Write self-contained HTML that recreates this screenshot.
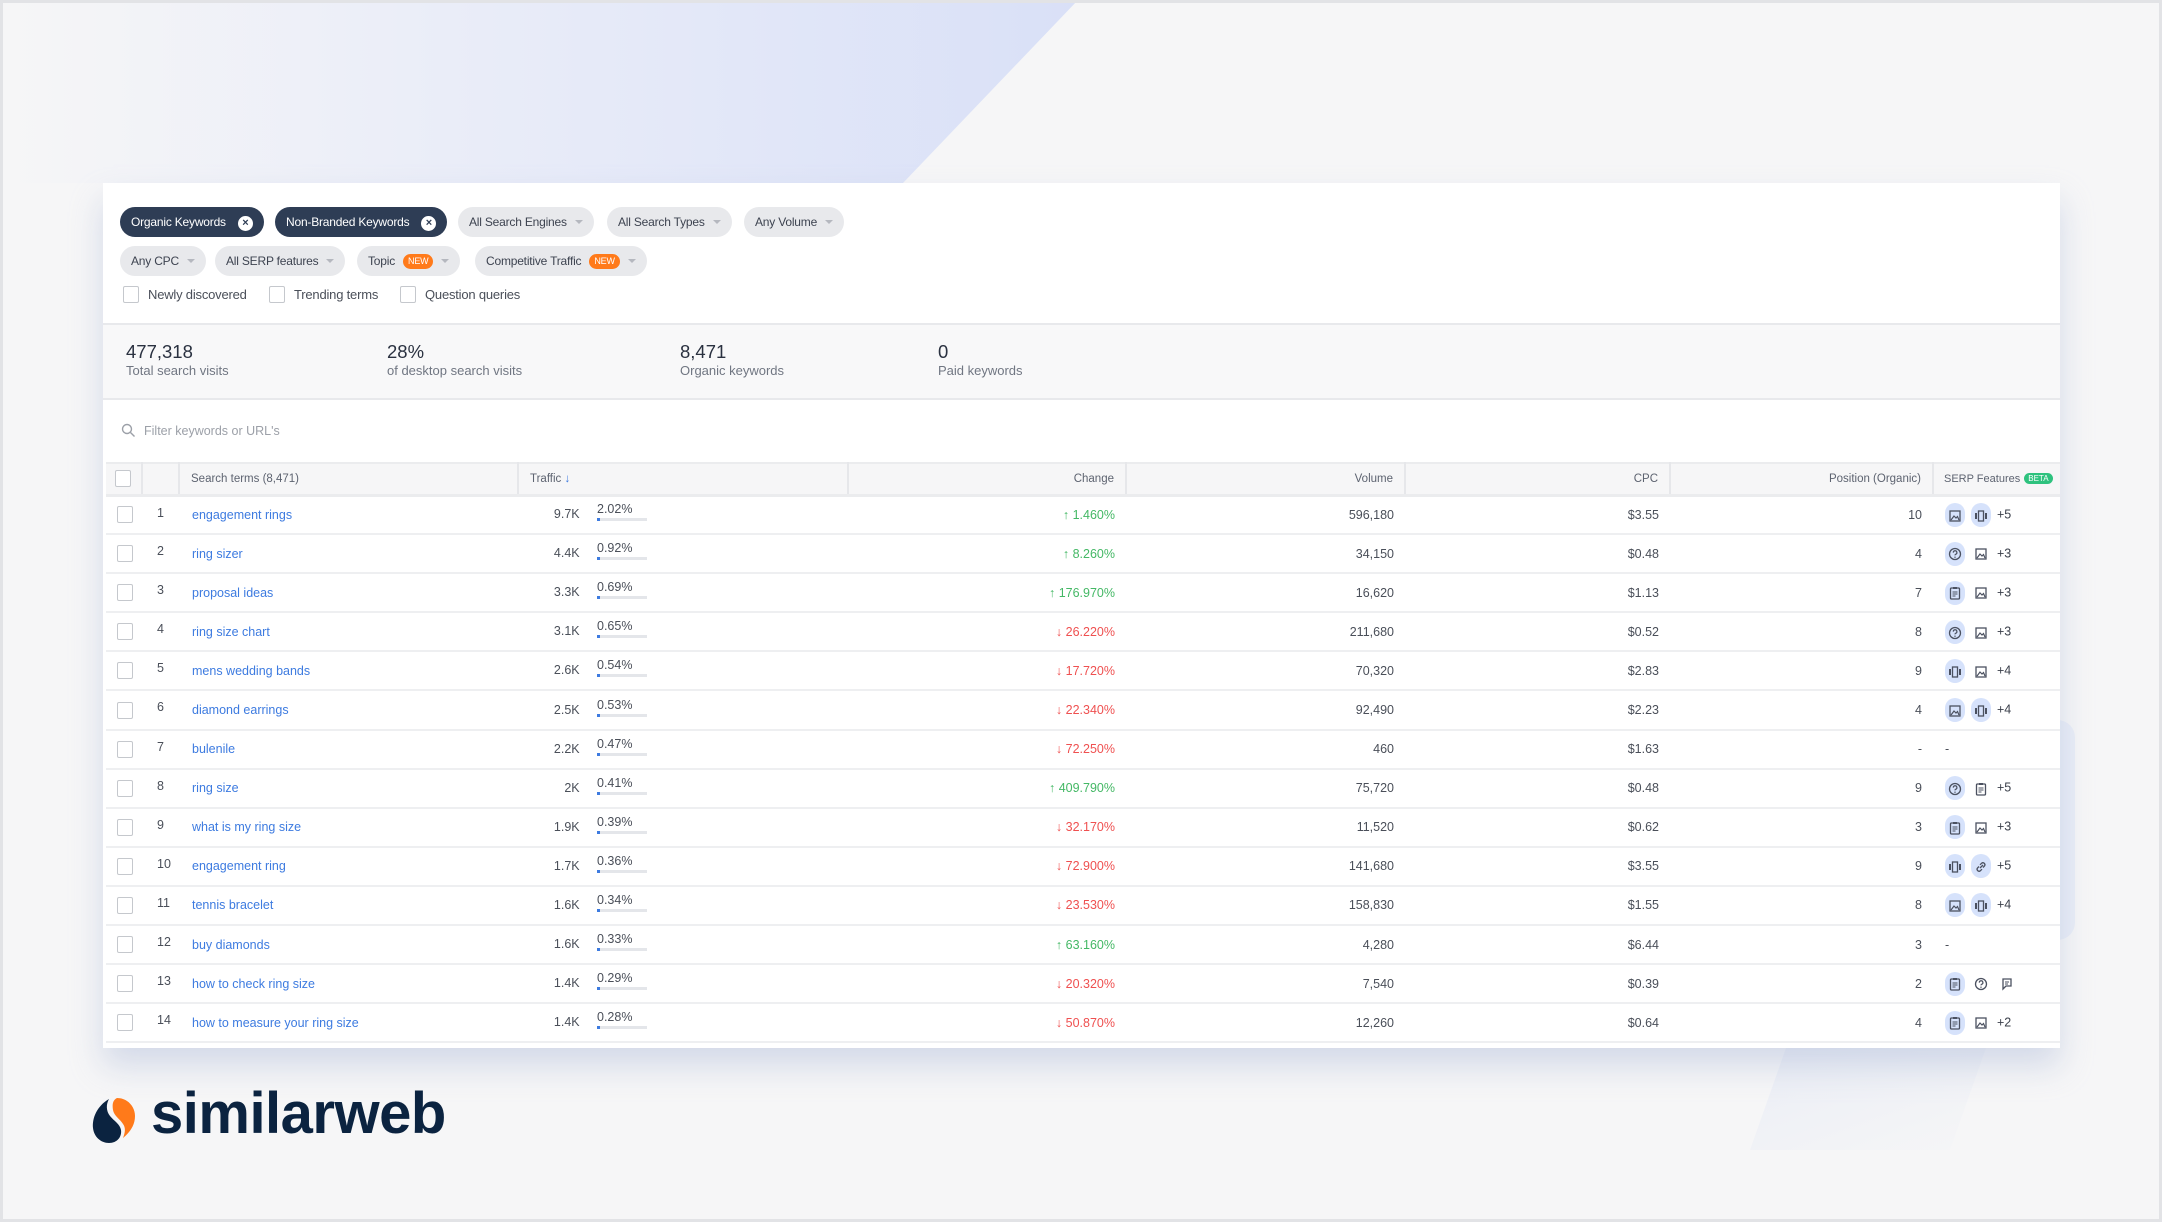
<!DOCTYPE html>
<html><head><meta charset="utf-8"><style>
*{box-sizing:border-box;margin:0;padding:0}
body{width:2162px;height:1222px;overflow:hidden;background:#f6f6f7;font-family:"Liberation Sans",sans-serif;position:relative;color:#3a3f4a}
.frame{position:absolute;inset:0;border:3px solid #e2e3e6;pointer-events:none;z-index:5}
.bg1{position:absolute;left:0;top:0;width:1080px;height:190px;background:linear-gradient(90deg,#f6f6f7 0%,#e6eaf8 55%,#d9e0f7 100%);clip-path:polygon(0 0,1078px 0,903px 183px,0 183px)}
.bg2{position:absolute;left:1750px;top:980px;width:260px;height:170px;background:linear-gradient(160deg,#e3e8f4,#f6f6f7);clip-path:polygon(60px 0,260px 0,200px 170px,0 170px);opacity:.8}
.bg3{position:absolute;left:2040px;top:720px;width:35px;height:220px;border-radius:20px;background:#e9edf7}
.panel{position:absolute;left:103px;top:183px;width:1957px;height:865px;background:#fff;box-shadow:0 18px 30px rgba(170,185,215,.45);overflow:hidden}
.chip{position:absolute;height:30px;border-radius:15px;background:#e8e9ec;color:#3d4350;font-size:12px;line-height:30px;padding:0 11px;white-space:nowrap;letter-spacing:-.2px}
.chip.d{background:#2e3d55;color:#fff}
.chip .x{display:inline-block;width:15px;height:15px;border-radius:50%;background:#fff;color:#2e3d55;font-size:11px;line-height:15px;text-align:center;font-weight:bold;margin-left:12px;vertical-align:0px}
.chip .ar{display:inline-block;margin-left:8px;border-left:4px solid transparent;border-right:4px solid transparent;border-top:4px solid #b5b8bf;vertical-align:2px}
.new{display:inline-block;background:#ff7a1a;color:#fff;font-size:9px;line-height:15px;height:15px;border-radius:8px;padding:0 5px;margin-left:8px;vertical-align:1px}
.cb{position:absolute;width:16px;height:17px;border:1.5px solid #c5c8cd;border-radius:2px;background:#fff}
.cbl{position:absolute;font-size:13px;color:#4a4f59;letter-spacing:-.2px}
.stats{position:absolute;left:0;top:140px;width:100%;height:77px;background:#f8f8f9;border-top:2px solid #e8e9ec;border-bottom:2px solid #e8e9ec}
.st{position:absolute;top:16px}
.st b{display:block;font-weight:normal;font-size:18.5px;color:#2a3140}
.st span{display:block;font-size:13px;color:#707682;margin-top:0px}
.search{position:absolute;left:18px;top:240px;font-size:12.5px;color:#9ca0a8}
table{position:absolute;left:3px;top:279px;border-collapse:collapse;table-layout:fixed;width:1954px}
th{height:32px;background:#f6f6f7;font-weight:normal;font-size:11.5px;color:#5d6370;border-top:2px solid #ebecee;border-bottom:3px solid #ebecee;border-right:2px solid #e6e7ea;text-align:right;padding:0 11px;white-space:nowrap}
td{height:39.1px;border-bottom:2.5px solid #eeeff1;font-size:12.5px;color:#4a4f59;text-align:right;padding:0 11px;white-space:nowrap;vertical-align:middle}
td.kw{text-align:left;color:#3d7be0;padding-left:13px}
td.n{text-align:left;padding-left:15px;vertical-align:top;padding-top:9px}
.up{color:#44b865}.dn{color:#ef5050}
.bar{display:inline-block;width:50px;text-align:left;vertical-align:middle;position:relative;top:-3px}
.bar i{display:block;height:3px;background:#e4e6ea;margin-top:2px;position:relative}
.bar i:before{content:"";position:absolute;left:0;top:0;width:3px;height:3px;background:#3d7be0}
td.sf{text-align:left;padding-left:12px}
.ic{display:inline-block;width:20px;height:24px;vertical-align:middle;margin-right:6px;text-align:center;line-height:24px}
.ic.h{background:#d6e2fb;border-radius:10px}
.ic svg{width:14px;height:14px;vertical-align:middle}
.pl{font-size:12.5px;color:#3a3f4a}
.beta{display:inline-block;background:#2ec27e;color:#fff;font-size:8px;border-radius:8px;padding:1px 4px;margin-left:4px;vertical-align:1px}
.sp{display:inline-block;width:190px}
</style></head><body>
<svg width="0" height="0" style="position:absolute">
<symbol id="img" viewBox="0 0 14 14"><rect x="2" y="2" width="10" height="10" fill="none" stroke="#4b5160" stroke-width="1.3"/><path d="M3 11l3-4 2 2 1.5-1.5L11 11" fill="none" stroke="#4b5160" stroke-width="1.2"/></symbol>
<symbol id="car" viewBox="0 0 14 14"><rect x="4.5" y="2" width="5" height="10" fill="none" stroke="#4b5160" stroke-width="1.3"/><rect x="1" y="4" width="2" height="6" fill="#4b5160"/><rect x="11" y="4" width="2" height="6" fill="#4b5160"/></symbol>
<symbol id="q" viewBox="0 0 14 14"><circle cx="7" cy="7" r="5.5" fill="none" stroke="#4b5160" stroke-width="1.3"/><path d="M5.3 5.6a1.8 1.8 0 1 1 2.3 1.7c-.5.2-.6.5-.6 1.1" fill="none" stroke="#4b5160" stroke-width="1.2"/><circle cx="7" cy="10.2" r=".7" fill="#4b5160"/></symbol>
<symbol id="doc" viewBox="0 0 14 14"><rect x="2.5" y="2" width="9" height="11" rx="1" fill="none" stroke="#4b5160" stroke-width="1.3"/><rect x="5" y="1" width="4" height="2" fill="#4b5160"/><path d="M4.5 6h5M4.5 8h5M4.5 10h3" stroke="#4b5160" stroke-width="1.1"/></symbol>
<symbol id="lnk" viewBox="0 0 14 14"><path d="M6 8l3-3M5 6.5L3.5 8a2 2 0 0 0 2.8 2.8L8 9.2M9 7.5L10.5 6A2 2 0 0 0 7.7 3.2L6 4.8" fill="none" stroke="#4b5160" stroke-width="1.3"/></symbol>
<symbol id="chat" viewBox="0 0 14 14"><path d="M3 2h8v7H6l-3 3z" fill="none" stroke="#4b5160" stroke-width="1.3"/><path d="M5 5h4M5 7h3" stroke="#4b5160" stroke-width="1.1"/></symbol>
</svg>
<div class="bg1"></div><div class="bg3"></div><div class="bg2"></div>
<div class="panel">
 <div class="chip d" style="left:17px;top:24px">Organic Keywords<span class="x">×</span></div>
 <div class="chip d" style="left:172px;top:24px">Non-Branded Keywords<span class="x">×</span></div>
 <div class="chip" style="left:355px;top:24px">All Search Engines<span class="ar"></span></div>
 <div class="chip" style="left:504px;top:24px">All Search Types<span class="ar"></span></div>
 <div class="chip" style="left:641px;top:24px">Any Volume<span class="ar"></span></div>
 <div class="chip" style="left:17px;top:63px">Any CPC<span class="ar"></span></div>
 <div class="chip" style="left:112px;top:63px">All SERP features<span class="ar"></span></div>
 <div class="chip" style="left:254px;top:63px">Topic<span class="new">NEW</span><span class="ar"></span></div>
 <div class="chip" style="left:372px;top:63px">Competitive Traffic<span class="new">NEW</span><span class="ar"></span></div>
 <div class="cb" style="left:20px;top:103px"></div><div class="cbl" style="left:45px;top:104px">Newly discovered</div>
 <div class="cb" style="left:166px;top:103px"></div><div class="cbl" style="left:191px;top:104px">Trending terms</div>
 <div class="cb" style="left:297px;top:103px"></div><div class="cbl" style="left:322px;top:104px">Question queries</div>
 <div class="stats">
  <div class="st" style="left:23px"><b>477,318</b><span>Total search visits</span></div>
  <div class="st" style="left:284px"><b>28%</b><span>of desktop search visits</span></div>
  <div class="st" style="left:577px"><b>8,471</b><span>Organic keywords</span></div>
  <div class="st" style="left:835px"><b>0</b><span>Paid keywords</span></div>
 </div>
 <div class="search"><svg width="15" height="15" viewBox="0 0 15 15" style="vertical-align:-3px;margin-right:8px"><circle cx="6" cy="6" r="4.5" fill="none" stroke="#9ca0a8" stroke-width="1.4"/><path d="M9.5 9.5l4 4" stroke="#9ca0a8" stroke-width="1.4"/></svg>Filter keywords or URL's</div>
 <table>
  <colgroup><col style="width:36px"><col style="width:37px"><col style="width:339px"><col style="width:330px"><col style="width:278px"><col style="width:279px"><col style="width:265px"><col style="width:263px"><col style="width:127px"></colgroup>
  <tr><th style="text-align:left;padding-left:9px"><span class="cb" style="position:relative;display:inline-block;vertical-align:middle"></span></th><th></th><th style="text-align:left">Search terms (8,471)</th><th style="text-align:left">Traffic <span style="color:#3d7be0">↓</span></th><th>Change</th><th>Volume</th><th>CPC</th><th>Position (Organic)</th><th style="text-align:left;border-right:0;padding-left:10px;font-size:11px">SERP Features<span class="beta">BETA</span></th></tr>
  <tr><td style="text-align:left;padding-left:11px"><span class="cb" style="position:relative;display:inline-block;vertical-align:middle"></span></td><td class="n">1</td><td class="kw">engagement rings</td><td>9.7K &nbsp;&nbsp;&nbsp;&nbsp;<span class="bar">2.02%<i></i></span><span class="sp"></span></td><td class="up">↑ 1.460%</td><td>596,180</td><td>$3.55</td><td>10</td><td class="sf"><span class="ic h"><svg><use href="#img"/></svg></span><span class="ic h"><svg><use href="#car"/></svg></span><span class="pl">+5</span></td></tr>
  <tr><td style="text-align:left;padding-left:11px"><span class="cb" style="position:relative;display:inline-block;vertical-align:middle"></span></td><td class="n">2</td><td class="kw">ring sizer</td><td>4.4K &nbsp;&nbsp;&nbsp;&nbsp;<span class="bar">0.92%<i></i></span><span class="sp"></span></td><td class="up">↑ 8.260%</td><td>34,150</td><td>$0.48</td><td>4</td><td class="sf"><span class="ic h"><svg><use href="#q"/></svg></span><span class="ic"><svg><use href="#img"/></svg></span><span class="pl">+3</span></td></tr>
  <tr><td style="text-align:left;padding-left:11px"><span class="cb" style="position:relative;display:inline-block;vertical-align:middle"></span></td><td class="n">3</td><td class="kw">proposal ideas</td><td>3.3K &nbsp;&nbsp;&nbsp;&nbsp;<span class="bar">0.69%<i></i></span><span class="sp"></span></td><td class="up">↑ 176.970%</td><td>16,620</td><td>$1.13</td><td>7</td><td class="sf"><span class="ic h"><svg><use href="#doc"/></svg></span><span class="ic"><svg><use href="#img"/></svg></span><span class="pl">+3</span></td></tr>
  <tr><td style="text-align:left;padding-left:11px"><span class="cb" style="position:relative;display:inline-block;vertical-align:middle"></span></td><td class="n">4</td><td class="kw">ring size chart</td><td>3.1K &nbsp;&nbsp;&nbsp;&nbsp;<span class="bar">0.65%<i></i></span><span class="sp"></span></td><td class="dn">↓ 26.220%</td><td>211,680</td><td>$0.52</td><td>8</td><td class="sf"><span class="ic h"><svg><use href="#q"/></svg></span><span class="ic"><svg><use href="#img"/></svg></span><span class="pl">+3</span></td></tr>
  <tr><td style="text-align:left;padding-left:11px"><span class="cb" style="position:relative;display:inline-block;vertical-align:middle"></span></td><td class="n">5</td><td class="kw">mens wedding bands</td><td>2.6K &nbsp;&nbsp;&nbsp;&nbsp;<span class="bar">0.54%<i></i></span><span class="sp"></span></td><td class="dn">↓ 17.720%</td><td>70,320</td><td>$2.83</td><td>9</td><td class="sf"><span class="ic h"><svg><use href="#car"/></svg></span><span class="ic"><svg><use href="#img"/></svg></span><span class="pl">+4</span></td></tr>
  <tr><td style="text-align:left;padding-left:11px"><span class="cb" style="position:relative;display:inline-block;vertical-align:middle"></span></td><td class="n">6</td><td class="kw">diamond earrings</td><td>2.5K &nbsp;&nbsp;&nbsp;&nbsp;<span class="bar">0.53%<i></i></span><span class="sp"></span></td><td class="dn">↓ 22.340%</td><td>92,490</td><td>$2.23</td><td>4</td><td class="sf"><span class="ic h"><svg><use href="#img"/></svg></span><span class="ic h"><svg><use href="#car"/></svg></span><span class="pl">+4</span></td></tr>
  <tr><td style="text-align:left;padding-left:11px"><span class="cb" style="position:relative;display:inline-block;vertical-align:middle"></span></td><td class="n">7</td><td class="kw">bulenile</td><td>2.2K &nbsp;&nbsp;&nbsp;&nbsp;<span class="bar">0.47%<i></i></span><span class="sp"></span></td><td class="dn">↓ 72.250%</td><td>460</td><td>$1.63</td><td>-</td><td class="sf">-</td></tr>
  <tr><td style="text-align:left;padding-left:11px"><span class="cb" style="position:relative;display:inline-block;vertical-align:middle"></span></td><td class="n">8</td><td class="kw">ring size</td><td>2K &nbsp;&nbsp;&nbsp;&nbsp;<span class="bar">0.41%<i></i></span><span class="sp"></span></td><td class="up">↑ 409.790%</td><td>75,720</td><td>$0.48</td><td>9</td><td class="sf"><span class="ic h"><svg><use href="#q"/></svg></span><span class="ic"><svg><use href="#doc"/></svg></span><span class="pl">+5</span></td></tr>
  <tr><td style="text-align:left;padding-left:11px"><span class="cb" style="position:relative;display:inline-block;vertical-align:middle"></span></td><td class="n">9</td><td class="kw">what is my ring size</td><td>1.9K &nbsp;&nbsp;&nbsp;&nbsp;<span class="bar">0.39%<i></i></span><span class="sp"></span></td><td class="dn">↓ 32.170%</td><td>11,520</td><td>$0.62</td><td>3</td><td class="sf"><span class="ic h"><svg><use href="#doc"/></svg></span><span class="ic"><svg><use href="#img"/></svg></span><span class="pl">+3</span></td></tr>
  <tr><td style="text-align:left;padding-left:11px"><span class="cb" style="position:relative;display:inline-block;vertical-align:middle"></span></td><td class="n">10</td><td class="kw">engagement ring</td><td>1.7K &nbsp;&nbsp;&nbsp;&nbsp;<span class="bar">0.36%<i></i></span><span class="sp"></span></td><td class="dn">↓ 72.900%</td><td>141,680</td><td>$3.55</td><td>9</td><td class="sf"><span class="ic h"><svg><use href="#car"/></svg></span><span class="ic h"><svg><use href="#lnk"/></svg></span><span class="pl">+5</span></td></tr>
  <tr><td style="text-align:left;padding-left:11px"><span class="cb" style="position:relative;display:inline-block;vertical-align:middle"></span></td><td class="n">11</td><td class="kw">tennis bracelet</td><td>1.6K &nbsp;&nbsp;&nbsp;&nbsp;<span class="bar">0.34%<i></i></span><span class="sp"></span></td><td class="dn">↓ 23.530%</td><td>158,830</td><td>$1.55</td><td>8</td><td class="sf"><span class="ic h"><svg><use href="#img"/></svg></span><span class="ic h"><svg><use href="#car"/></svg></span><span class="pl">+4</span></td></tr>
  <tr><td style="text-align:left;padding-left:11px"><span class="cb" style="position:relative;display:inline-block;vertical-align:middle"></span></td><td class="n">12</td><td class="kw">buy diamonds</td><td>1.6K &nbsp;&nbsp;&nbsp;&nbsp;<span class="bar">0.33%<i></i></span><span class="sp"></span></td><td class="up">↑ 63.160%</td><td>4,280</td><td>$6.44</td><td>3</td><td class="sf">-</td></tr>
  <tr><td style="text-align:left;padding-left:11px"><span class="cb" style="position:relative;display:inline-block;vertical-align:middle"></span></td><td class="n">13</td><td class="kw">how to check ring size</td><td>1.4K &nbsp;&nbsp;&nbsp;&nbsp;<span class="bar">0.29%<i></i></span><span class="sp"></span></td><td class="dn">↓ 20.320%</td><td>7,540</td><td>$0.39</td><td>2</td><td class="sf"><span class="ic h"><svg><use href="#doc"/></svg></span><span class="ic"><svg><use href="#q"/></svg></span><span class="ic"><svg><use href="#chat"/></svg></span></td></tr>
  <tr><td style="text-align:left;padding-left:11px"><span class="cb" style="position:relative;display:inline-block;vertical-align:middle"></span></td><td class="n">14</td><td class="kw">how to measure your ring size</td><td>1.4K &nbsp;&nbsp;&nbsp;&nbsp;<span class="bar">0.28%<i></i></span><span class="sp"></span></td><td class="dn">↓ 50.870%</td><td>12,260</td><td>$0.64</td><td>4</td><td class="sf"><span class="ic h"><svg><use href="#doc"/></svg></span><span class="ic"><svg><use href="#img"/></svg></span><span class="pl">+2</span></td></tr>
 </table>
</div>
<svg style="position:absolute;left:91px;top:1096px" width="50" height="50" viewBox="0 0 50 50">
 <path d="M18 3C6 10 1 22 2 32c1 9 8 15 16 15 8 0 13-6 12-13-1-6-7-9-11-14C15 15 15 8 18 3z" fill="#0b2340"/>
 <path d="M26 2c10 0 18 8 18 18 0 10-6 17-12 22 2-5 3-10 0-14-3-5-9-8-10-14C21 8 22 4 26 2z" fill="#ff7a1a"/>
</svg>
<div style="position:absolute;left:151px;top:1080px;font-size:58px;font-weight:bold;color:#0b2340;letter-spacing:-0.5px;font-family:'Liberation Sans','DejaVu Sans',sans-serif">similarweb</div>
<div class="frame"></div>
</body></html>
